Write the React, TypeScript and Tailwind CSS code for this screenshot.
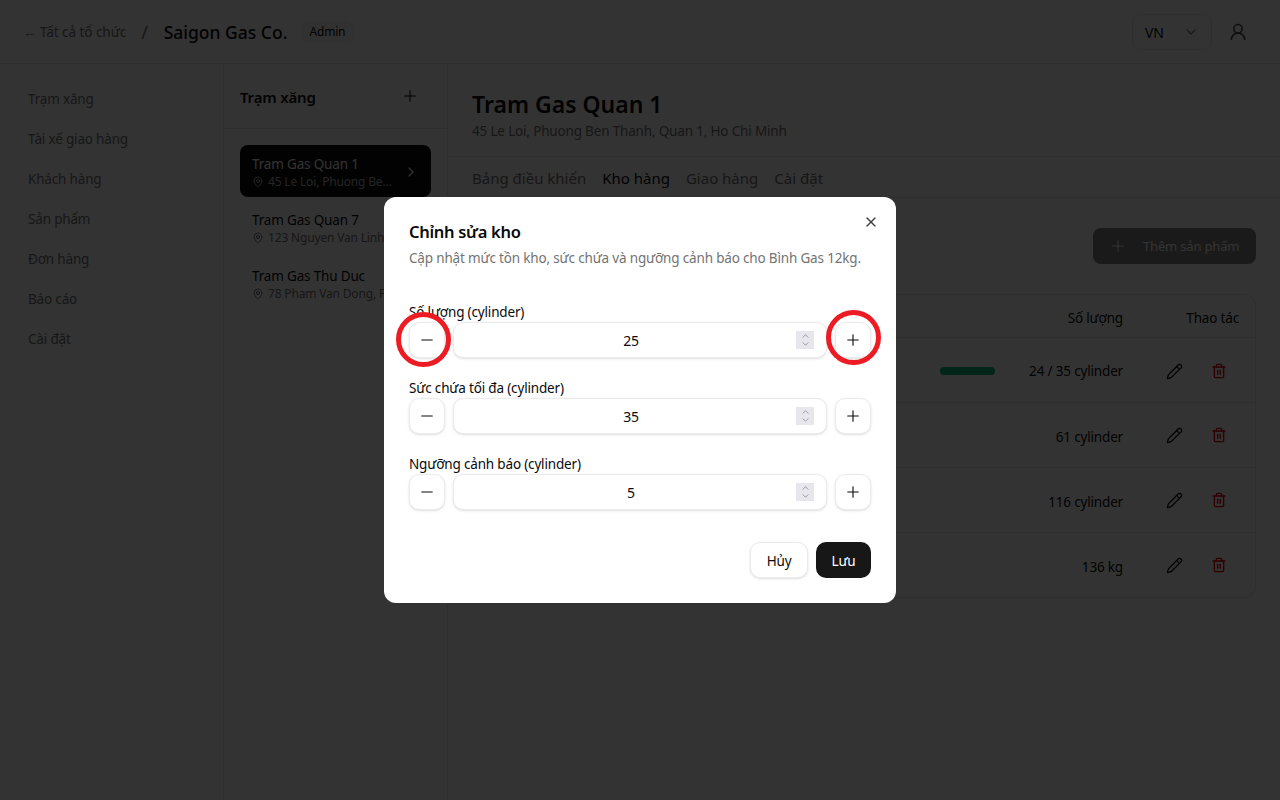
import { ChevronDown, ChevronRight, ChevronUp, MapPin, Minus, Pencil, Plus, Trash2, UserRound, X } from 'lucide-react';

const navItems = ['Trạm xăng', 'Tài xế giao hàng', 'Khách hàng', 'Sản phẩm', 'Đơn hàng', 'Báo cáo', 'Cài đặt'];

const stations = [
  { name: 'Tram Gas Quan 1', address: '45 Le Loi, Phuong Ben Thanh, Quan 1', active: true },
  { name: 'Tram Gas Quan 7', address: '123 Nguyen Van Linh, Quan 7', active: false },
  { name: 'Tram Gas Thu Duc', address: '78 Pham Van Dong, Phuong Linh Dong', active: false },
];

const tabs = ['Bảng điều khiển', 'Kho hàng', 'Giao hàng', 'Cài đặt'];

const rows = [
  { name: 'Binh Gas 12kg', qty: '24 / 35 cylinder', bar: true },
  { name: 'Binh Gas 20kg', qty: '61 cylinder', bar: false },
  { name: 'Binh Gas 45kg', qty: '116 cylinder', bar: false },
  { name: 'Gas Bulk', qty: '136 kg', bar: false },
];

const fields = [
  { label: 'Số lượng (cylinder)', value: '25', marked: true },
  { label: 'Sức chứa tối đa (cylinder)', value: '35', marked: false },
  { label: 'Ngưỡng cảnh báo (cylinder)', value: '5', marked: false },
];

function StepButton({ children }: { children: React.ReactNode }) {
  return (
    <button className="flex h-9 w-9 shrink-0 items-center justify-center rounded-[10px] border border-[#ebebeb] bg-white text-[#0a0a0a] shadow-sm">
      {children}
    </button>
  );
}

function Field({ label, value, marked }: { label: string; value: string; marked: boolean }) {
  return (
    <div className="flex flex-col">
      <label className="h-5 text-[13.5px] leading-5 text-[#0a0a0a]">{label}</label>
      <div className="relative flex gap-2">
        <StepButton>
          <Minus size={18} strokeWidth={1.5} />
        </StepButton>
        <div className="relative flex h-9 flex-1 items-center justify-center rounded-[10px] border border-[#ebebeb] bg-white pr-[18px] text-[14px] text-[#0a0a0a] shadow-sm">
          {value}
          <span className="absolute right-[12px] top-[8px] flex h-[18px] w-[18px] flex-col items-center justify-center bg-[#e6e6ec] text-[#8a8a90]">
            <ChevronUp size={11} className="-mb-[1px]" />
            <ChevronDown size={11} className="-mt-[1px]" />
          </span>
        </div>
        <StepButton>
          <Plus size={18} strokeWidth={1.5} />
        </StepButton>
        {marked && (
          <>
            <span className="absolute -left-[13px] -top-[10px] h-[55px] w-[55px] rounded-full border-[5px] border-[#ed1c24]" />
            <span className="absolute -right-[10px] -top-[12px] h-[55px] w-[55px] rounded-full border-[5px] border-[#ed1c24]" />
          </>
        )}
      </div>
    </div>
  );
}

export default function App() {
  return (
    <div className="relative flex h-[800px] w-[1280px] flex-col overflow-hidden bg-white tracking-[-0.17px] text-[#0a0a0a] font-['Noto_Sans','Liberation_Sans',sans-serif]">
      <header className="flex h-16 shrink-0 items-center justify-between border-b border-[#e5e5e5] pl-[23px] pr-[34px]">
        <div className="flex items-center pt-[2px]">
          <span className="text-[13.5px] tracking-[-0.05px] text-[#737373]">← Tất cả tổ chức</span>
          <span className="ml-[15px] text-[18px] text-[#737373]">/</span>
          <span className="ml-4 text-[17.5px] font-medium tracking-normal">Saigon Gas Co.</span>
          <span className="ml-[14px] -mt-[2px] rounded-md bg-[#f5f5f5] px-2 py-0.5 text-[12px]">Admin</span>
        </div>
        <div className="flex items-center gap-4">
          <div className="flex h-9 w-20 items-center justify-between rounded-[10px] border border-[#e5e5e5] px-3 pt-[1px] text-[14px]">
            VN
            <ChevronDown size={16} className="opacity-50" />
          </div>
          <UserRound size={20} className="mr-[-2px] text-[#525252]" />
        </div>
      </header>

      <div className="flex min-h-0 flex-1">
        <aside className="flex w-56 shrink-0 flex-col border-r border-[#e5e5e5] px-7 pt-[15px]">
          {navItems.map((item) => (
            <div key={item} className="flex h-10 items-center text-[13.5px] text-[#737373]">
              {item}
            </div>
          ))}
        </aside>

        <section className="flex w-56 shrink-0 flex-col border-r border-[#e5e5e5]">
          <div className="flex h-[65px] shrink-0 items-center justify-between border-b border-[#e5e5e5] pl-4 pr-7">
            <h2 className="pt-[2px] text-[15px] font-semibold">Trạm xăng</h2>
            <Plus size={18} strokeWidth={1.5} />
          </div>
          <div className="flex flex-col gap-1 p-4">
            {stations.map((s) => (
              <div
                key={s.name}
                className={`flex h-[52px] items-center rounded-lg px-3 pt-[2px] ${s.active ? 'bg-[#0a0a0a] text-[#fafafa]' : ''}`}
              >
                <div className="min-w-0 flex-1">
                  <div className="truncate text-[13.5px] leading-5">{s.name}</div>
                  <div className={`flex items-center gap-1 text-[12px] leading-4 ${s.active ? 'opacity-70' : 'text-[#737373]'}`}>
                    <MapPin size={12} className="shrink-0" />
                    <span className="max-w-[128px] truncate">{s.address}</span>
                  </div>
                </div>
                {s.active && <ChevronRight size={16} />}
              </div>
            ))}
          </div>
        </section>

        <main className="flex min-w-0 flex-1 flex-col">
          <div className="flex h-[93px] shrink-0 flex-col justify-center border-b border-[#e5e5e5] px-6 pt-2">
            <h1 className="text-[23px] font-semibold leading-8 tracking-normal">Tram Gas Quan 1</h1>
            <p className="mt-[1px] text-[13.5px] leading-5 text-[#737373]">45 Le Loi, Phuong Ben Thanh, Quan 1, Ho Chi Minh</p>
          </div>
          <div className="flex h-[41px] shrink-0 items-center gap-4 border-b border-[#e5e5e5] px-6 pt-[2px] text-[15px] tracking-normal">
            {tabs.map((t) => (
              <span key={t} className={t === 'Kho hàng' ? 'text-[#0a0a0a]' : 'text-[#737373]'}>
                {t}
              </span>
            ))}
          </div>
          <div className="flex flex-col pl-6 pr-6 pt-[30px]">
            <div className="flex justify-end">
              <button className="flex h-9 w-[163px] items-center gap-4 rounded-lg bg-[#0a0a0a]/50 pl-4 pt-[2px] text-[13px] text-white">
                <Plus size={18} strokeWidth={1.5} className="-mt-[2px]" />
                Thêm sản phẩm
              </button>
            </div>
            <div className="mt-[30px] w-[784px] rounded-xl border border-[#e5e5e5]">
              <div className="flex h-[43px] items-center border-b border-[#e5e5e5] pt-[4px] text-[13.5px]">
                <span className="flex-1 pl-4">Sản phẩm</span>
                <span className="w-[200px] pr-0 text-right">Số lượng</span>
                <span className="w-[132px] pr-4 text-right">Thao tác</span>
              </div>
              {rows.map((r) => (
                <div key={r.name} className="flex h-[65px] items-center border-b border-[#e5e5e5] pt-[2px] text-[13.5px] last:h-[64px] last:border-b-0">
                  <span className="flex-1 pl-4">{r.name}</span>
                  {r.bar && <span className="mr-[34px] h-2 w-[55px] rounded-full bg-emerald-500" />}
                  <span className={r.bar ? 'text-right' : 'pt-[2px] text-right'}>{r.qty}</span>
                  <div className={`flex w-[132px] items-center justify-end gap-7 pr-[28px] ${r.bar ? '' : 'pb-[2px]'}`}>
                    <Pencil size={17} strokeWidth={1.75} />
                    <Trash2 size={16} className="text-[#e7000b]" />
                  </div>
                </div>
              ))}
            </div>
          </div>
        </main>
      </div>

      <div className="absolute inset-0 flex items-center justify-center bg-black/80">
        <div className="relative h-[406px] w-[512px] rounded-xl bg-white p-[25px]">
          <X size={16} className="absolute right-[17px] top-[17px] text-[#404040]" />
          <h3 className="text-[16.5px] font-semibold leading-5 tracking-[-0.3px]">Chỉnh sửa kho</h3>
          <p className="mt-[6px] whitespace-nowrap text-[13.5px] leading-5 text-[#737373]">
            Cập nhật mức tồn kho, sức chứa và ngưỡng cảnh báo cho Bình Gas 12kg.
          </p>
          <div className="mt-[34px] flex flex-col gap-5">
            {fields.map((f) => (
              <Field key={f.label} label={f.label} value={f.value} marked={f.marked} />
            ))}
          </div>
          <div className="mt-8 flex justify-end gap-2">
            <button className="h-9 w-[58px] rounded-[10px] border border-[#ebebeb] bg-white pt-[2px] text-[13.5px] shadow-sm">Hủy</button>
            <button className="h-9 w-[55px] rounded-[10px] bg-[#171717] pt-[2px] text-[13.5px] text-white">Lưu</button>
          </div>
        </div>
      </div>
    </div>
  );
}
